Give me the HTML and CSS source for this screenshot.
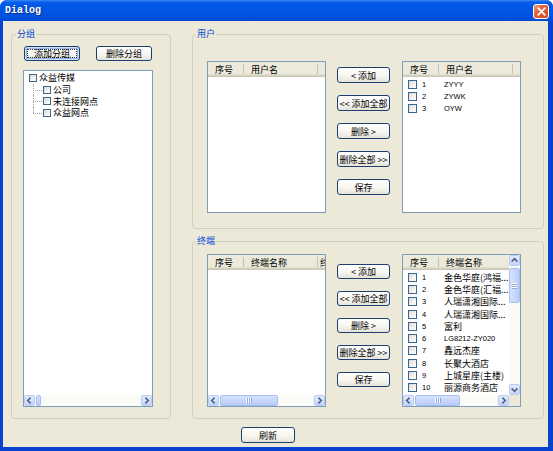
FILE: index.html
```html
<!DOCTYPE html>
<html>
<head>
<meta charset="utf-8">
<title>Dialog</title>
<link rel="stylesheet" href="styles.css">
</head>
<body>
<div class="window">
  <div class="titlebar">
    <span class="title">Dialog</span>
    <span class="close"><svg width="9" height="9" viewBox="0 0 9 9"><path d="M1.2 1.2L7.8 7.8M7.8 1.2L1.2 7.8" stroke="#fff" stroke-width="1.8" stroke-linecap="round"/></svg></span>
  </div>
  <div class="client">
    <div class="main">
      <section class="group group-left">
        <div class="legend">分组</div>
        <div class="gl-btns">
          <button class="btn btn-wide focused"><span>添加分组</span></button>
          <button class="btn btn-wide">删除分组</button>
        </div>
        <div class="tree">
          <div class="tree-body">
            <div class="node"><i class="cb"></i><span>众益传媒</span></div>
            <div class="children">
              <div class="node child"><i class="cb"></i><span>公司</span></div>
              <div class="node child"><i class="cb"></i><span>未连接网点</span></div>
              <div class="node child"><i class="cb"></i><span>众益网点</span></div>
            </div>
          </div>
          <div class="hscroll">
            <span class="sb-btn"><svg width="9" height="9" viewBox="0 0 9 9"><path d="M5.6 1.6L2.7 4.5L5.6 7.4" fill="none" stroke="#4D6185" stroke-width="1.6"/></svg></span>
            <span class="sb-track"><span class="sb-thumb thumb-tree"></span></span>
            <span class="sb-btn"><svg width="9" height="9" viewBox="0 0 9 9"><path d="M3.4 1.6L6.3 4.5L3.4 7.4" fill="none" stroke="#4D6185" stroke-width="1.6"/></svg></span>
          </div>
        </div>
      </section>

      <div class="right-col">
        <section class="group group-user">
          <div class="legend">用户</div>
          <div class="pane">
            <div class="list">
              <div class="lv-head">
                <div class="hcol c1">序号</div>
                <div class="hcol c2">用户名</div>
                <div class="hcol c3"></div>
              </div>
            </div>
            <div class="btn-col">
              <button class="btn">&lt; 添加</button>
              <button class="btn">&lt;&lt; 添加全部</button>
              <button class="btn">删除 &gt;</button>
              <button class="btn">删除全部 &gt;&gt;</button>
              <button class="btn">保存</button>
            </div>
            <div class="list">
              <div class="lv-head">
                <div class="hcol c1">序号</div>
                <div class="hcol c2">用户名</div>
                <div class="hcol c3"></div>
              </div>
              <div class="rows">
                <div class="row"><i class="cb"></i><span class="num">1</span><span class="name latin">ZYYY</span></div>
                <div class="row"><i class="cb"></i><span class="num">2</span><span class="name latin">ZYWK</span></div>
                <div class="row"><i class="cb"></i><span class="num">3</span><span class="name latin">OYW</span></div>
              </div>
            </div>
          </div>
        </section>

        <section class="group group-term">
          <div class="legend">终端</div>
          <div class="pane">
            <div class="list scroll-list">
              <div class="lv-main">
                <div class="lv-head">
                  <div class="hcol c1">序号</div>
                  <div class="hcol c2">终端名称</div>
                  <div class="hcol c3">终</div>
                </div>
              </div>
              <div class="hscroll">
                <span class="sb-btn"><svg width="9" height="9" viewBox="0 0 9 9"><path d="M5.6 1.6L2.7 4.5L5.6 7.4" fill="none" stroke="#4D6185" stroke-width="1.6"/></svg></span>
                <span class="sb-track"><span class="sb-thumb thumb-tl"><svg width="8" height="5" viewBox="0 0 8 5"><path d="M1.5 0v5M3.5 0v5M5.5 0v5" stroke="#fff"/><path d="M2.5 0v5M4.5 0v5M6.5 0v5" stroke="#8FA8E2"/></svg></span></span>
                <span class="sb-btn"><svg width="9" height="9" viewBox="0 0 9 9"><path d="M3.4 1.6L6.3 4.5L3.4 7.4" fill="none" stroke="#4D6185" stroke-width="1.6"/></svg></span>
              </div>
            </div>
            <div class="btn-col btn-col-term">
              <button class="btn">&lt; 添加</button>
              <button class="btn">&lt;&lt; 添加全部</button>
              <button class="btn">删除 &gt;</button>
              <button class="btn">删除全部 &gt;&gt;</button>
              <button class="btn">保存</button>
            </div>
            <div class="list scroll-list">
              <div class="lv-top">
                <div class="lv-main">
                  <div class="lv-head">
                    <div class="hcol c1">序号</div>
                    <div class="hcol c2 last">终端名称</div>
                  </div>
                  <div class="rows rows-term">
                    <div class="row"><i class="cb"></i><span class="num">1</span><span class="name">金色华庭(鸿福...</span></div>
                    <div class="row"><i class="cb"></i><span class="num">2</span><span class="name">金色华庭(汇福...</span></div>
                    <div class="row"><i class="cb"></i><span class="num">3</span><span class="name">人瑞潇湘国际...</span></div>
                    <div class="row"><i class="cb"></i><span class="num">4</span><span class="name">人瑞潇湘国际...</span></div>
                    <div class="row"><i class="cb"></i><span class="num">5</span><span class="name">富利</span></div>
                    <div class="row"><i class="cb"></i><span class="num">6</span><span class="name latin">LG8212-ZY020</span></div>
                    <div class="row"><i class="cb"></i><span class="num">7</span><span class="name">鑫远杰座</span></div>
                    <div class="row"><i class="cb"></i><span class="num">8</span><span class="name">长聚大酒店</span></div>
                    <div class="row"><i class="cb"></i><span class="num">9</span><span class="name">上城星座(主楼)</span></div>
                    <div class="row"><i class="cb"></i><span class="num">10</span><span class="name">丽源商务酒店</span></div>
                  </div>
                </div>
                <div class="vscroll">
                  <span class="sb-btn"><svg width="9" height="9" viewBox="0 0 9 9"><path d="M1.6 5.6L4.5 2.7L7.4 5.6" fill="none" stroke="#4D6185" stroke-width="1.6"/></svg></span>
                  <span class="sb-vtrack"><span class="sb-vthumb"><svg width="5" height="8" viewBox="0 0 5 8"><path d="M0 1.5h5M0 3.5h5M0 5.5h5" stroke="#fff"/><path d="M0 2.5h5M0 4.5h5M0 6.5h5" stroke="#8FA8E2"/></svg></span></span>
                  <span class="sb-btn"><svg width="9" height="9" viewBox="0 0 9 9"><path d="M1.6 3.4L4.5 6.3L7.4 3.4" fill="none" stroke="#4D6185" stroke-width="1.6"/></svg></span>
                </div>
              </div>
              <div class="lv-bottom">
                <div class="hscroll">
                  <span class="sb-btn"><svg width="9" height="9" viewBox="0 0 9 9"><path d="M5.6 1.6L2.7 4.5L5.6 7.4" fill="none" stroke="#4D6185" stroke-width="1.6"/></svg></span>
                  <span class="sb-track"><span class="sb-thumb thumb-tr"><svg width="8" height="5" viewBox="0 0 8 5"><path d="M1.5 0v5M3.5 0v5M5.5 0v5" stroke="#fff"/><path d="M2.5 0v5M4.5 0v5M6.5 0v5" stroke="#8FA8E2"/></svg></span></span>
                  <span class="sb-btn"><svg width="9" height="9" viewBox="0 0 9 9"><path d="M3.4 1.6L6.3 4.5L3.4 7.4" fill="none" stroke="#4D6185" stroke-width="1.6"/></svg></span>
                </div>
                <div class="corner"></div>
              </div>
            </div>
          </div>
        </section>
      </div>
    </div>
    <div class="footer">
      <button class="btn btn-refresh">刷新</button>
    </div>
  </div>
</div>
</body>
</html>
```

FILE: styles.css
```css
* { box-sizing: border-box; }
html, body { margin: 0; padding: 0; }
body {
  width: 553px;
  height: 451px;
  overflow: hidden;
  background: #ffffff;
  font-family: "Noto Sans CJK SC", "Liberation Sans", sans-serif;
  font-size: 9px;
  color: #000;
}

.window {
  width: 553px;
  height: 451px;
  display: flex;
  flex-direction: column;
  background: #0842CF;
  border-radius: 7px 7px 0 0;
}

.titlebar {
  height: 21px;
  flex: none;
  display: flex;
  align-items: center;
  justify-content: space-between;
  padding: 0 4px 0 4px;
  background: linear-gradient(#3D8DF6 0, #0A5FEC 2px, #0057E6 6px, #0053E1 16px, #0048D2 21px);
  border-radius: 7px 7px 0 0;
}
.title {
  font: bold 10px "Liberation Mono", monospace;
  color: #fff;
  text-shadow: 1px 1px 0 #0B2A8C;
  padding-left: 1px;
}
.close {
  width: 16px;
  height: 15px;
  margin-top: 2px;
  border: 1px solid #fff;
  border-radius: 3px;
  background: linear-gradient(135deg, #EF9A7C 0%, #E2613A 40%, #D4461E 100%);
  display: flex;
  align-items: center;
  justify-content: center;
}

.client {
  flex: 1;
  margin: 0 5px 4px 3px;
  background: #ECE9D8;
  padding: 13px 0 0 8px;
}

.main {
  display: flex;
  align-items: flex-start;
  gap: 21px;
}

.group {
  border: 1px solid #D0D0BF;
  border-radius: 4px;
}
.legend {
  margin: -7px 0 0 -7px;
  padding: 0 1px;
  width: max-content;
  height: 12px;
  line-height: 12px;
  background: #ECE9D8;
  color: #0046D5;
}
.group-user .legend,
.group-term .legend { margin-left: -11px; }

.btn {
  font: inherit;
  line-height: 1;
  color: #000;
  width: 53px;
  height: 16px;
  padding: 0;
  border: 1px solid #1E3F72;
  border-radius: 3px;
  background: linear-gradient(#FFFFFF 0%, #F7F6F1 55%, #E6E3D8 100%);
  display: flex;
  align-items: center;
  justify-content: center;
  white-space: nowrap;
}
.btn-wide { width: 56px; height: 15px; }
.btn.focused {
  box-shadow: inset 0 0 0 1px #CEDFFA, inset 0 0 0 2px #98B6E8;
}
.btn.focused span {
  width: calc(100% - 4px);
  height: calc(100% - 4px);
  border: 1px dotted #333;
  display: flex;
  align-items: center;
  justify-content: center;
}

/* left group */
.group-left {
  width: 160px;
  height: 385px;
  padding-left: 11px;
}
.gl-btns {
  display: flex;
  gap: 16px;
  margin: 6px 0 0 1px;
}
.tree {
  margin-top: 9px;
  width: 130px;
  height: 337px;
  border: 1px solid #7F9DB9;
  background: #fff;
  display: flex;
  flex-direction: column;
}
.tree-body {
  flex: 1;
  padding: 1px 0 0 5px;
}
.node {
  display: flex;
  align-items: center;
  height: 11.7px;
  white-space: nowrap;
}
.node .cb {
  width: 8px;
  height: 8px;
  margin-right: 2px;
}
.children { margin-left: 4px; }
.child {
  position: relative;
  padding-left: 10px;
}
.child::before {
  content: "";
  position: absolute;
  left: 0;
  top: 0;
  height: 100%;
  border-left: 1px dotted #A0A0A0;
}
.child:last-child::before { height: 50%; }
.child::after {
  content: "";
  position: absolute;
  left: 0;
  top: 50%;
  width: 9px;
  border-top: 1px dotted #A0A0A0;
}

/* checkbox */
.cb {
  display: block;
  flex: none;
  width: 9px;
  height: 9px;
  border: 1px solid #3A6690;
  background: linear-gradient(135deg, #D9D8D0 0%, #F4F4F0 60%, #FFFFFF 100%);
}

/* right column */
.right-col {
  width: 352px;
  display: flex;
  flex-direction: column;
  gap: 12px;
}
.group-user { height: 195px; padding-left: 14px; }
.group-term { height: 178px; padding-left: 14px; }
.pane { display: flex; align-items: flex-start; }
.group-user .pane { margin-top: 21px; }
.group-term .pane { margin-top: 7px; }

.list {
  width: 119px;
  height: 152px;
  border: 1px solid #7F9DB9;
  background: #fff;
  overflow: hidden;
}
.group-term .list { height: 153px; }
.scroll-list {
  display: flex;
  flex-direction: column;
}
.lv-main { flex: 1; min-width: 0; overflow: hidden; }
.lv-top { flex: 1; display: flex; min-height: 0; }
.lv-bottom { display: flex; height: 11px; flex: none; }
.corner { width: 11px; height: 11px; background: #ECE9D8; flex: none; }

.lv-head {
  display: flex;
  height: 15px;
  background: #EBEADB;
  box-shadow: inset 0 -1px #CBC7B8, inset 0 -2px #D6D2C2, inset 0 -3px #E2DECD;
  white-space: nowrap;
  overflow: hidden;
}
.hcol {
  flex: none;
  height: 10px;
  margin-top: 2px;
  line-height: 11px;
  padding-left: 7px;
  border-right: 1px solid #C5C2B2;
  white-space: nowrap;
}
.hcol.c1 { width: 36px; }
.hcol.c2 { width: 74px; }
.hcol.c2.last { border-right: none; flex: 1; }
.hcol.c3 { flex: none; border-right: none; padding-left: 2px; }

.rows { padding-top: 1px; }
.row {
  display: flex;
  align-items: center;
  height: 12.3px;
  padding-left: 5px;
  white-space: nowrap;
}
.num {
  width: 22px;
  margin-left: 5px;
  font: 7.5px "Liberation Sans", sans-serif;
}
.name { white-space: nowrap; }
.latin { font: 7.5px "Liberation Sans", sans-serif; }

.btn-col {
  display: flex;
  flex-direction: column;
  gap: 12px;
  margin: 6px 12px 0 11px;
}
.btn-col-term { margin-top: 10px; }
.btn-col-term .btn { height: 15px; }

/* scrollbars */
.hscroll {
  flex: 1;
  height: 11px;
  min-height: 11px;
  display: flex;
  background: #FAFAF6;
}
.tree .hscroll, .scroll-list > .hscroll { flex: none; }
.sb-btn {
  width: 11px;
  height: 11px;
  flex: none;
  border: 1px solid #B8CBF5;
  border-radius: 2px;
  background: linear-gradient(#E3EBFE, #C4D4FA);
  display: flex;
  align-items: center;
  justify-content: center;
}
.sb-track {
  flex: 1;
  display: flex;
  align-items: stretch;
}
.sb-thumb {
  margin-left: 1px;
  border: 1px solid #A8BFF2;
  border-radius: 2px;
  background: linear-gradient(#D6E2FD, #BACDF9);
  display: flex;
  align-items: center;
  justify-content: center;
}
.thumb-tree { width: 5px; }
.thumb-tl { width: 58px; }
.thumb-tr { width: 45px; }

.vscroll {
  width: 11px;
  flex: none;
  display: flex;
  flex-direction: column;
  background: #FAFAF6;
}
.sb-vtrack { flex: 1; display: flex; flex-direction: column; }
.sb-vthumb {
  margin-top: 2px;
  height: 35px;
  border: 1px solid #A8BFF2;
  border-radius: 2px;
  background: linear-gradient(to right, #D6E2FD, #BACDF9);
  display: flex;
  align-items: center;
  justify-content: center;
}

.footer {
  margin-top: 8px;
  padding-left: 230px;
}
.btn-refresh { width: 54px; height: 16px; }
```
